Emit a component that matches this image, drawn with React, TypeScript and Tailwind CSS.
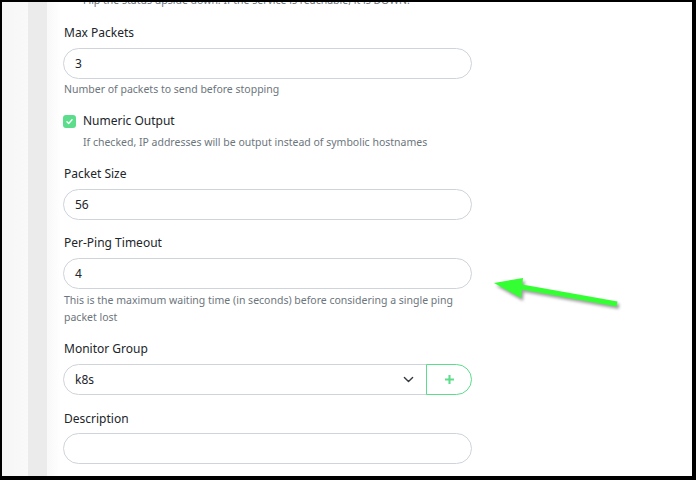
import React from "react";

const font = { fontFamily: '"Noto Sans", "Open Sans", sans-serif' };

function Label({ children, className = "" }: { children: React.ReactNode; className?: string }) {
  return <div className={`text-[12px] leading-[18px] text-[#212529] ${className}`}>{children}</div>;
}

function Input({ value }: { value?: string }) {
  return (
    <div className="h-[31px] w-[409px] rounded-full border border-[#ced4da] bg-white flex items-center pl-[11px] text-[12px] text-[#212529]">
      {value}
    </div>
  );
}

function Help({ children, className = "" }: { children: React.ReactNode; className?: string }) {
  return <div className={`text-[10.5px] leading-[17px] text-[#6c757d] ${className}`}>{children}</div>;
}

export default function App() {
  return (
    <div className="w-[696px] h-[480px] bg-black pt-[2px] pl-[2px] pr-[4px] pb-[4px]" style={font}>
      <div className="relative flex h-full w-full overflow-hidden bg-white">
        <div className="w-[26px] h-full bg-gradient-to-r from-[#f6f6f6] to-[#f9f9f9]" />
        <div className="w-[19px] h-full bg-[#ebebeb]" />
        <div className="w-[14px] h-full bg-gradient-to-r from-[#f8f8f8] to-white" />
        <div className="flex-1 h-full pl-[2px] relative">
          <div className="absolute left-[2px] top-[-10px] text-[10.5px] leading-[17px] text-[#6c757d] pl-[20px] whitespace-nowrap">
            Flip the status upside down. If the service is reachable, it is DOWN.
          </div>
          <div className="pt-[22px]">
            <Label className="pl-[1px]">Max Packets</Label>
            <div className="mt-[6px]"><Input value="3" /></div>
            <Help className="mt-[2px] pl-[1px]">Number of packets to send before stopping</Help>

            <div className="mt-[14px] flex items-center gap-[7px]">
              <div className="w-[13px] h-[13px] rounded-[3px] bg-[#5cdd8b] flex items-center justify-center">
                <svg width="9" height="9" viewBox="0 0 16 16" fill="none">
                  <path d="M3.5 8.5 L6.5 11.5 L12.5 5" stroke="white" strokeWidth="2.4" strokeLinecap="round" strokeLinejoin="round" />
                </svg>
              </div>
              <Label>Numeric Output</Label>
            </div>
            <Help className="mt-[4px] pl-[20px]">If checked, IP addresses will be output instead of symbolic hostnames</Help>

            <Label className="mt-[14px] pl-[1px]">Packet Size</Label>
            <div className="mt-[6px]"><Input value="56" /></div>

            <Label className="mt-[14px] pl-[1px]">Per-Ping Timeout</Label>
            <div className="mt-[6px]"><Input value="4" /></div>
            <Help className="mt-[3px] pl-[1px] w-[400px]">
              This is the maximum waiting time (in seconds) before considering a single ping packet lost
            </Help>

            <Label className="mt-[14px] pl-[1px]">Monitor Group</Label>
            <div className="mt-[6px] flex w-[409px] h-[31px]">
              <div className="flex-1 rounded-l-full border border-[#ced4da] flex items-center pl-[11px] pr-[12px] text-[12px] text-[#212529]">
                <span className="flex-1">k8s</span>
                <svg width="11" height="11" viewBox="0 0 16 16" fill="none">
                  <path d="M2 5 L8 11 L14 5" stroke="#343a40" strokeWidth="2" strokeLinecap="round" strokeLinejoin="round" />
                </svg>
              </div>
              <div className="w-[46px] rounded-r-full border border-[#5cdd8b] flex items-center justify-center -ml-[1px]">
                <svg width="11" height="11" viewBox="0 0 16 16">
                  <path d="M8 1.5 V14.5 M1.5 8 H14.5" stroke="#5cdd8b" strokeWidth="3" />
                </svg>
              </div>
            </div>

            <Label className="mt-[15px] pl-[1px]">Description</Label>
            <div className="mt-[5px]"><Input /></div>
          </div>
        </div>
        <svg className="absolute left-0 top-0 pointer-events-none" width="690" height="474" viewBox="0 0 690 474">
          <defs>
            <filter id="sh" x="-20%" y="-50%" width="140%" height="200%">
              <feGaussianBlur stdDeviation="1.5" />
            </filter>
          </defs>
          <g transform="translate(-2,-2)">
            <g transform="translate(2,3)" filter="url(#sh)" opacity="0.55">
              <path d="M521 286.5 L617 303.5" stroke="#555" strokeWidth="5" />
              <path d="M494 283 L523 278 L521 298 Z" fill="#555" />
            </g>
            <path d="M519 286.5 L617 304" stroke="#33ff33" strokeWidth="5" />
            <path d="M494 283 L523 278 L521 298 Z" fill="#33ff33" />
          </g>
        </svg>
      </div>
    </div>
  );
}
